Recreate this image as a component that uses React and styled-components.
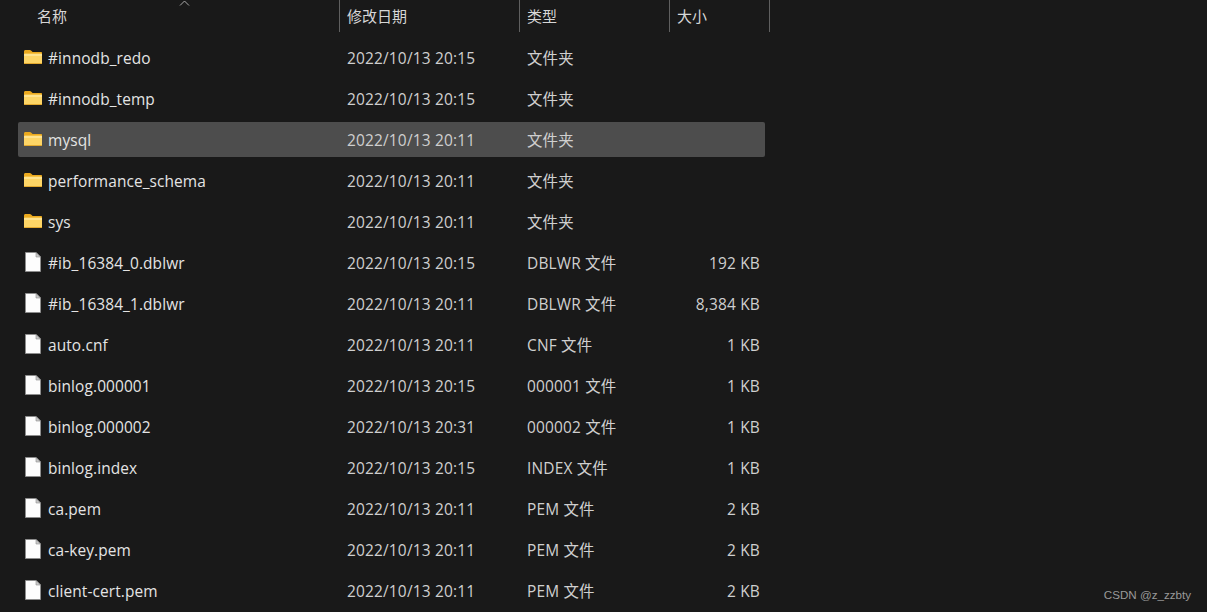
import React from "react";
import styled, { createGlobalStyle } from "styled-components";

const Global = createGlobalStyle`
  html, body { margin: 0; padding: 0; background: #191919; }
  #root { height: 612px; overflow: hidden; }
`;

const Page = styled.div`
  position: relative;
  width: 1207px;
  height: 612px;
  overflow: hidden;
  background: #191919;
  color: #e4e4e4;
  font-family: "Open Sans", "Noto Sans CJK SC", sans-serif;
  font-size: 15.45px;
`;

const Header = styled.div`
  position: relative;
  display: grid;
  grid-template-columns: 340px 180px 150px 100px;
  height: 32px;
  margin-bottom: 8px;
`;

const HeaderCell = styled.div`
  box-sizing: border-box;
  display: flex;
  align-items: center;
  height: 32px;
  padding-left: ${(p) => p.$pad}px;
  padding-bottom: 2px;
  border-right: 1px solid #5f5f5f;
  color: #d6d6d6;
  font-family: "Noto Sans CJK SC", sans-serif;
  font-size: 15px;
`;

const SortArrow = styled.svg`
  position: absolute;
  left: 179px;
  top: 0;
`;

const List = styled.div`
  display: flex;
  flex-direction: column;
  gap: 6px;
  margin-left: 18px;
  width: 747px;
`;

const Row = styled.div`
  display: grid;
  grid-template-columns: 321px 180px 150px 91px;
  align-items: center;
  height: 35px;
  border-radius: 2px;
  background: ${(p) => (p.$selected ? "#4d4d4d" : "transparent")};
`;

const NameCell = styled.div`
  display: flex;
  align-items: center;
  gap: 5px;
  padding-left: 5px;
`;

const IconSlot = styled.span`
  display: flex;
  justify-content: center;
  width: 20px;
  flex: none;
`;

const Name = styled.span`
  white-space: nowrap;
  line-height: 20px;
  letter-spacing: 0.1px;
`;

const Cell = styled.div`
  color: #cfcfcf;
  font-size: 15.45px;
  letter-spacing: 0.18px;
  white-space: nowrap;
  padding-left: ${(p) => p.$pad || 0}px;
`;

const SizeCell = styled(Cell)`
  text-align: right;
`;

const Watermark = styled.div`
  position: absolute;
  right: 16px;
  bottom: 9px;
  color: #9a9a9a;
  font-family: "Liberation Sans", sans-serif;
  font-size: 11.6px;
  line-height: 16px;
`;

const FolderSvg = styled.svg`
  margin-top: 0;
`;

const FileSvg = styled.svg`
  margin-top: -1px;
`;

const FolderIcon = () => (
  <FolderSvg width="18" height="15" viewBox="0 0 18 15">
    <path d="M0 1.500C0 .7.6 0 1.400 0h4.400c.5 0 .9.2 1.200.5L8.600 2H17c.6 0 1 .4 1 1v2H0z" fill="#eba91e" />
    <rect x="0" y="3.500" width="18" height="10.500" rx="1" fill="#fdd566" />
    <rect x="0" y="13" width="18" height="1" fill="#e3a92e" />
    <rect x="0" y="4" width="18" height="2" fill="#ffe38e" />
  </FolderSvg>
);

const FileIcon = () => (
  <FileSvg width="16" height="20" viewBox="0 0 16 20">
    <path d="M.5.500h10.500l4.500 4.500v14.500H.5z" fill="#fdfdfd" stroke="#8d8d8d" />
    <path d="M11 .500v4.500h4.500z" fill="#c9c9c9" stroke="#8d8d8d" strokeWidth=".6" />
  </FileSvg>
);

const columns = [
  { label: "名称", pad: 37 },
  { label: "修改日期", pad: 7 },
  { label: "类型", pad: 7 },
  { label: "大小", pad: 7 },
];

const rows = [
  ["#innodb_redo", "2022/10/13 20:15", "文件夹", "", true],
  ["#innodb_temp", "2022/10/13 20:15", "文件夹", "", true],
  ["mysql", "2022/10/13 20:11", "文件夹", "", true, true],
  ["performance_schema", "2022/10/13 20:11", "文件夹", "", true],
  ["sys", "2022/10/13 20:11", "文件夹", "", true],
  ["#ib_16384_0.dblwr", "2022/10/13 20:15", "DBLWR 文件", "192 KB"],
  ["#ib_16384_1.dblwr", "2022/10/13 20:11", "DBLWR 文件", "8,384 KB"],
  ["auto.cnf", "2022/10/13 20:11", "CNF 文件", "1 KB"],
  ["binlog.000001", "2022/10/13 20:15", "000001 文件", "1 KB"],
  ["binlog.000002", "2022/10/13 20:31", "000002 文件", "1 KB"],
  ["binlog.index", "2022/10/13 20:15", "INDEX 文件", "1 KB"],
  ["ca.pem", "2022/10/13 20:11", "PEM 文件", "2 KB"],
  ["ca-key.pem", "2022/10/13 20:11", "PEM 文件", "2 KB"],
  ["client-cert.pem", "2022/10/13 20:11", "PEM 文件", "2 KB"],
];

export default function App() {
  return (
    <Page>
      <Global />
      <Header>
        {columns.map((c) => (
          <HeaderCell key={c.label} $pad={c.pad}>{c.label}</HeaderCell>
        ))}
        <SortArrow width="11" height="6" viewBox="0 0 11 6">
          <path d="M1 5.500 5.500 1 10 5.500" fill="none" stroke="#a8a8a8" />
        </SortArrow>
      </Header>
      <List>
        {rows.map(([name, date, type, size, folder, selected]) => (
          <Row key={name} $selected={selected}>
            <NameCell>
              <IconSlot>{folder ? <FolderIcon /> : <FileIcon />}</IconSlot>
              <Name>{name}</Name>
            </NameCell>
            <Cell $pad={8}>{date}</Cell>
            <Cell $pad={8}>{type}</Cell>
            <SizeCell>{size}</SizeCell>
          </Row>
        ))}
      </List>
      <Watermark>CSDN @z_zzbty</Watermark>
    </Page>
  );
}
